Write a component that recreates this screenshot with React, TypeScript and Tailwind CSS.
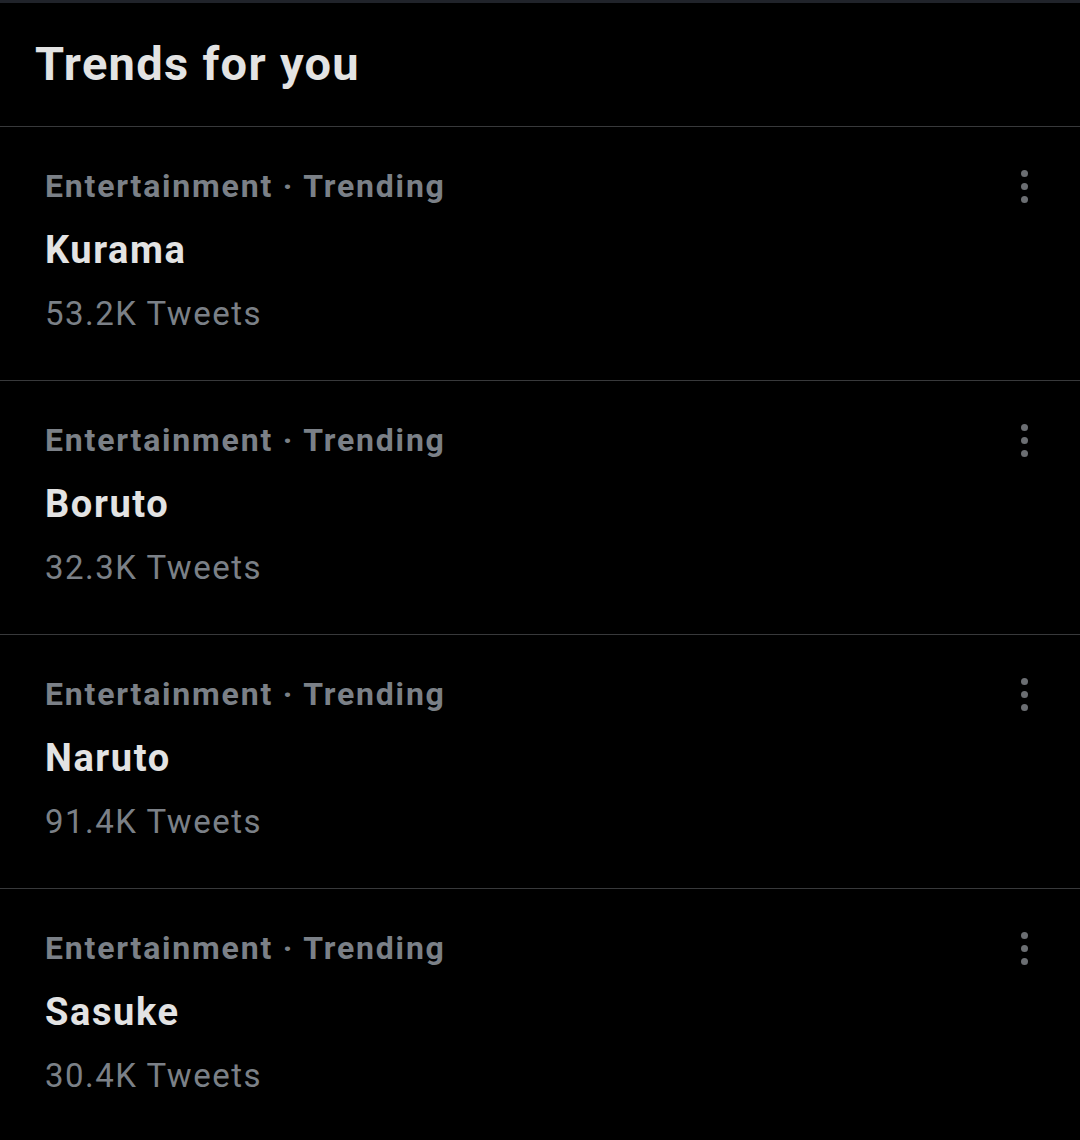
import React from 'react';

interface Trend {
  category: string;
  name: string;
  tweets: string;
}

const trends: Trend[] = [
  { category: 'Entertainment · Trending', name: 'Kurama', tweets: '53.2K Tweets' },
  { category: 'Entertainment · Trending', name: 'Boruto', tweets: '32.3K Tweets' },
  { category: 'Entertainment · Trending', name: 'Naruto', tweets: '91.4K Tweets' },
  { category: 'Entertainment · Trending', name: 'Sasuke', tweets: '30.4K Tweets' },
];

const MoreDots: React.FC = () => (
  <div className="flex flex-col items-center gap-[6px] mt-[4px]">
    <span className="w-[7px] h-[7px] rounded-full bg-[#6b6e72]" />
    <span className="w-[7px] h-[7px] rounded-full bg-[#6b6e72]" />
    <span className="w-[7px] h-[7px] rounded-full bg-[#6b6e72]" />
  </div>
);

const TrendRow: React.FC<{ trend: Trend }> = ({ trend }) => (
  <div className="h-[254px] border-b border-[#38393b] pl-[45px] pr-[52px] pt-[39px] flex items-start justify-between">
    <div className="flex flex-col">
      <div className="text-[32px] leading-[40px] font-bold tracking-[1.8px] text-[#7b8087]">{trend.category}</div>
      <div className="mt-[22px] text-[38px] leading-[44px] font-bold tracking-[1.6px] text-[#e3e3e3]">{trend.name}</div>
      <div className="mt-[22px] text-[33px] leading-[40px] tracking-[1.5px] text-[#7b8087]">{trend.tweets}</div>
    </div>
    <MoreDots />
  </div>
);

export default function App() {
  return (
    <div className="w-[1080px] h-[1140px] bg-black overflow-hidden" style={{ fontFamily: 'Roboto, "Noto Sans", sans-serif' }}>
      <div className="h-[3px] bg-[#20232a]" />
      <header className="h-[124px] border-b border-[#38393b] pl-[35px] pt-[33px]">
        <h1 className="text-[47px] leading-[56px] font-bold tracking-[1.3px] text-[#e3e3e3]">Trends for you</h1>
      </header>
      {trends.map((t) => (
        <TrendRow key={t.name} trend={t} />
      ))}
    </div>
  );
}
